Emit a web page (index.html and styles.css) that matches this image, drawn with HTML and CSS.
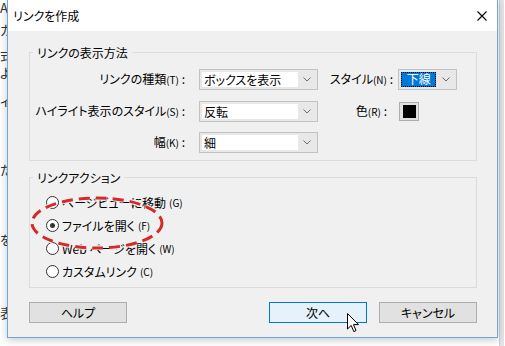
FILE: index.html
```html
<!DOCTYPE html>
<html lang="ja">
<head>
    <meta charset="UTF-8">
    <title>リンクを作成</title>
    <link rel="stylesheet" href="styles.css">
</head>
<body>
    <!-- ダイアログの後ろのページ -->
    <div class="page">
        <div class="page-text">
            <p class="l1">A</p>
            <p class="l2">カ</p>
            <p class="l3">式</p>
            <p class="l4">よ</p>
            <p class="l5">ィ</p>
            <p class="l6">た</p>
            <p class="l7">を</p>
            <p class="l8">表</p>
        </div>
        <div class="page-scroll"></div>
    </div>

    <div class="dialog">
        <div class="titlebar">
            <span class="title">リンクを作成</span>
            <svg class="close" width="10" height="10" viewBox="0 0 10 10">
                <path d="M0.5 0.5 L9.5 9.5 M9.5 0.5 L0.5 9.5" stroke="#000" stroke-width="1.1" fill="none"/>
            </svg>
        </div>

        <div class="dialog-body">
            <div class="group group-display">
                <span class="group-title">リンクの表示方法</span>
                <div class="display-grid">
                    <label class="field-label">リンクの種類<span class="key">(T)</span> :</label>
                    <div class="combo">
                        <span class="combo-field">ボックスを表示</span>
                        <span class="combo-arrow"><svg width="8" height="5" viewBox="0 0 8 5"><polyline points="0.5,0.5 4,4 7.5,0.5" fill="none" stroke="#6b6b6b"/></svg></span>
                    </div>
                    <label class="field-label field-label-right">スタイル<span class="key">(N)</span> :</label>
                    <div class="combo combo-list">
                        <span class="combo-selected">下線</span>
                        <span class="combo-arrow"><svg width="8" height="5" viewBox="0 0 8 5"><polyline points="0.5,0.5 4,4 7.5,0.5" fill="none" stroke="#6b6b6b"/></svg></span>
                    </div>

                    <label class="field-label">ハイライト表示のスタイル<span class="key">(S)</span> :</label>
                    <div class="combo">
                        <span class="combo-field">反転</span>
                        <span class="combo-arrow"><svg width="8" height="5" viewBox="0 0 8 5"><polyline points="0.5,0.5 4,4 7.5,0.5" fill="none" stroke="#6b6b6b"/></svg></span>
                    </div>
                    <label class="field-label field-label-right field-label-color">色<span class="key">(R)</span> :</label>
                    <div class="swatch"><span class="swatch-color"></span></div>

                    <label class="field-label">幅<span class="key">(K)</span> :</label>
                    <div class="combo">
                        <span class="combo-field">細</span>
                        <span class="combo-arrow"><svg width="8" height="5" viewBox="0 0 8 5"><polyline points="0.5,0.5 4,4 7.5,0.5" fill="none" stroke="#6b6b6b"/></svg></span>
                    </div>
                </div>
            </div>

            <div class="group group-action">
                <span class="group-title">リンクアクション</span>
                <div class="radio-row"><span class="radio"></span>ページビューに移動<span class="key">(G)</span></div>
                <div class="radio-row"><span class="radio checked"></span>ファイルを開く<span class="key">(F)</span></div>
                <div class="radio-row"><span class="radio"></span>Web ページを開く<span class="key">(W)</span></div>
                <div class="radio-row"><span class="radio"></span>カスタムリンク<span class="key">(C)</span></div>
            </div>

            <div class="buttons">
                <button class="btn">ヘルプ</button>
                <div class="buttons-right">
                    <button class="btn btn-default">次へ</button>
                    <button class="btn">キャンセル</button>
                </div>
            </div>
        </div>
    </div>

    <!-- 赤い点線の囲み -->
    <svg class="mark" width="134" height="54" viewBox="0 0 134 54">
        <ellipse cx="67" cy="27" rx="65" ry="25" fill="none" stroke="#f0f0f0" stroke-width="5" stroke-dasharray="11 6"/>
        <ellipse cx="67" cy="27" rx="65" ry="25" fill="none" stroke="#d42a2a" stroke-width="3" stroke-dasharray="11 6"/>
    </svg>

    <!-- マウスカーソル -->
    <svg class="cursor" width="13" height="21" viewBox="0 0 13 21">
        <path d="M0.5 0.5 L0.5 16 L4.2 12.4 L6.8 18.6 L9 17.6 L6.5 11.6 L11.5 11.6 Z" fill="#fff" stroke="#000" stroke-width="1" stroke-linejoin="round"/>
    </svg>
</body>
</html>
```

FILE: styles.css
```css
* {
    box-sizing: border-box;
}

body {
    margin: 0;
    width: 505px;
    height: 346px;
    overflow: hidden;
    position: relative;
    background: #fff;
    font-family: "Noto Sans CJK JP", "Noto Sans", sans-serif;
    font-size: 12px;
    font-feature-settings: "palt";
    color: #000;
}

/* 後ろのページ */
.page {
    display: flex;
    justify-content: space-between;
    height: 346px;
}

.page-text {
    width: 7px;
    overflow: hidden;
    font-size: 13px;
    color: #333;
}

.page-text p {
    margin: 0;
    line-height: 16px;
    white-space: nowrap;
}

.l2 { margin-top: 6px !important; }
.l3 { margin-top: 9px !important; }
.l4 { margin-top: 2px !important; }
.l5 { margin-top: 11px !important; }
.l6 { margin-top: 54px !important; }
.l7 { margin-top: 54px !important; }
.l8 { margin-top: 57px !important; }

.page-scroll {
    width: 5px;
    margin-right: 1px;
    background: #e4e4e4;
    border-left: 1px solid #cfcfcf;
}

/* ダイアログ */
.dialog {
    position: absolute;
    left: 7px;
    top: 0;
    width: 491px;
    height: 338px;
    border: 1px solid #6aa9df;
    border-top: none;
    background: #f0f0f0;
    box-shadow: 0 2px 8px rgba(0, 0, 0, 0.22);
    display: flex;
    flex-direction: column;
}

.titlebar {
    height: 31px;
    background: #fff;
    display: flex;
    align-items: center;
    justify-content: space-between;
    padding: 0 10px 0 5px;
}

.title {
    font-size: 12px;
    line-height: 16px;
}

.dialog-body {
    padding: 21px 20px 0 21px;
}

.group {
    position: relative;
    border: 1px solid #dcdcdc;
}

.group-title {
    position: absolute;
    top: -8px;
    left: 3px;
    padding: 0 4px;
    line-height: 16px;
    background: #f0f0f0;
}

.key {
    font-size: 10px;
}

/* リンクの表示方法 */
.group-display {
    padding: 16px 0 7px 0;
}

.display-grid {
    display: grid;
    grid-template-columns: 169px 119px 80px 59px;
    grid-auto-rows: 21px;
    row-gap: 10.5px;
    align-items: center;
}

.field-label {
    text-align: right;
    padding-right: 14px;
    white-space: nowrap;
    line-height: 16px;
}

.field-label-right {
    padding-right: 5px;
}

.field-label-color {
    padding-right: 11px;
}

.combo {
    height: 21px;
    border: 1px solid #c2c2c2;
    background: #e8e8e8;
    padding: 2px;
    display: flex;
}

.combo-field {
    flex: 1;
    background: #fff;
    padding-left: 2px;
    line-height: 15px;
    white-space: nowrap;
}

.combo-arrow {
    width: 17px;
    display: flex;
    align-items: center;
    justify-content: center;
}

.combo-list .combo-arrow {
    margin-left: 1px;
}

.combo-selected {
    width: 36px;
    background: #0078d7;
    color: #fff;
    text-align: center;
    line-height: 13px;
    outline: 1px dotted #000;
    outline-offset: -1px;
}

.swatch {
    width: 20px;
    height: 19px;
    margin-left: 1px;
    border: 1px solid #adadad;
    background: #e1e1e1;
    display: flex;
    align-items: center;
    justify-content: center;
}

.swatch-color {
    width: 13px;
    height: 13px;
    background: #000;
}

/* リンクアクション */
.group-display + .group-action {
    margin-top: 16px;
}

.group-action {
    padding: 13px 0 4px 16px;
}

.radio-row {
    height: 23px;
    display: flex;
    align-items: center;
    gap: 3px;
    white-space: nowrap;
}

.radio {
    width: 13px;
    height: 13px;
    border: 1px solid #333;
    border-radius: 50%;
    background: #fff;
    display: flex;
    align-items: center;
    justify-content: center;
}

.radio.checked::after {
    content: "";
    width: 5px;
    height: 5px;
    border-radius: 50%;
    background: #333;
}

/* ボタン */
.buttons {
    margin-top: 14px;
    display: flex;
    justify-content: space-between;
}

.buttons-right {
    display: flex;
    gap: 12px;
}

.btn {
    width: 98px;
    height: 21px;
    padding: 0;
    border: 1px solid #adadad;
    background: #e1e1e1;
    font-family: inherit;
    font-size: 12px;
    font-feature-settings: "palt";
    color: #000;
}

.btn-default {
    border-color: #0078d7;
    background: #e5f1fb;
}

/* 重なるもの */
.mark {
    position: absolute;
    left: 30px;
    top: 196px;
}

.cursor {
    position: absolute;
    left: 347px;
    top: 313px;
}
```
